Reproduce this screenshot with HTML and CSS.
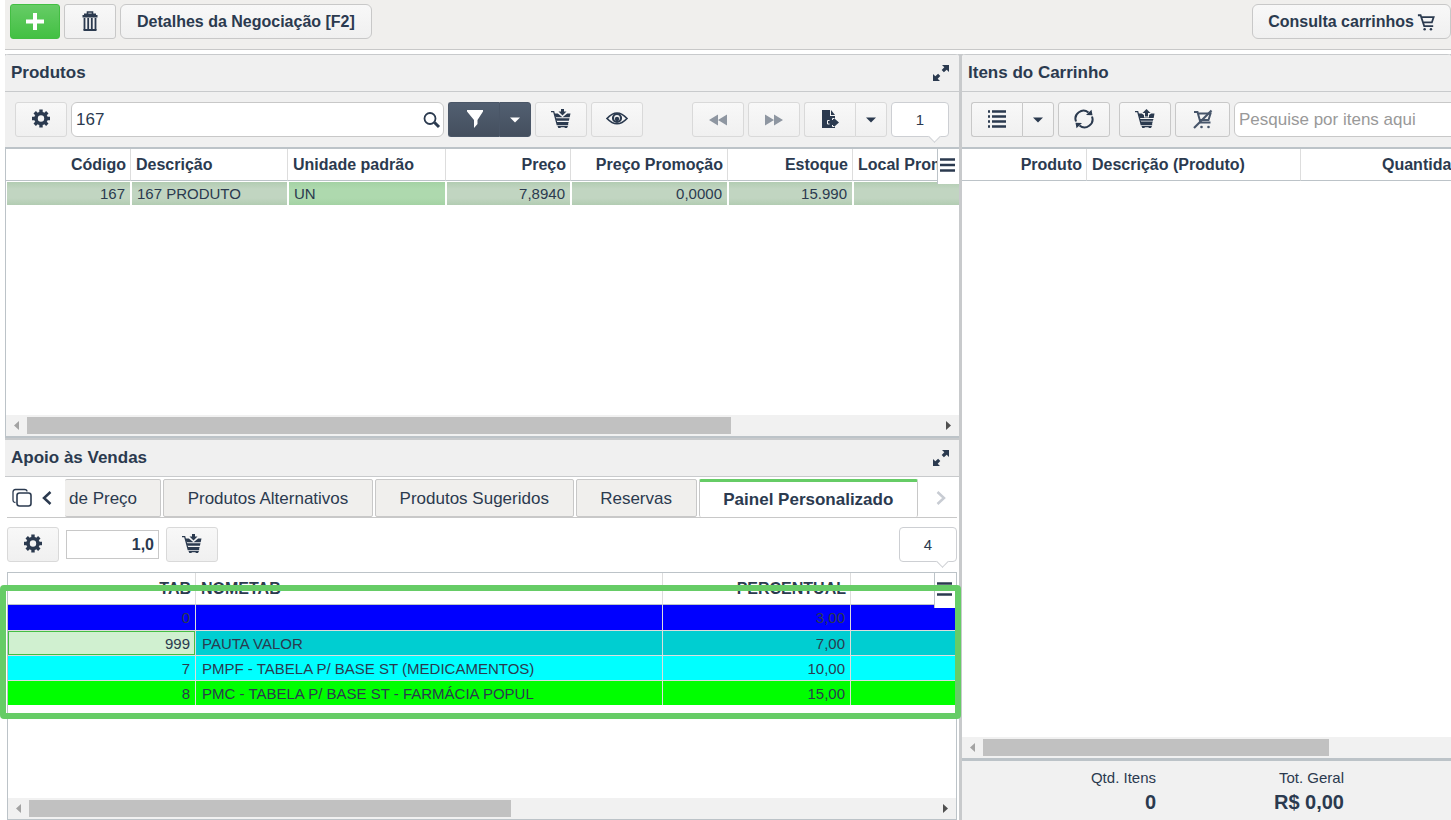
FILE: index.html
```html
<!DOCTYPE html>
<html lang="pt-BR">
<head>
    <meta charset="UTF-8">
    <meta name="viewport" content="width=device-width, initial-scale=1.0">
    <title>Central de Vendas</title>
    <link rel="stylesheet" href="styles.css">
</head>
<body>
<!-- icones -->
<svg class="sprite" aria-hidden="true">
    <symbol id="i-plus" viewBox="0 0 20 20"><path d="M1 10.500h18M10 2v17" fill="none" stroke="currentColor" stroke-width="4"/></symbol>
    <symbol id="i-trash" viewBox="0 0 20 20"><path d="M7.500 3V1h5v2" fill="none" stroke="currentColor" stroke-width="1.600"/><path d="M4 2.500h12v1.500h1.500v2.500h-15V4H4zM3.500 18h13v2h-13z" fill="currentColor"/><path d="M4.500 7v12M8.200 7v12M11.800 7v12M15.500 7v12" fill="none" stroke="currentColor" stroke-width="1.800"/></symbol>
    <symbol id="i-gear" viewBox="0 0 20 20"><circle cx="10" cy="9.500" r="5" fill="none" stroke="currentColor" stroke-width="3.600"/><g stroke="currentColor" stroke-width="3.400"><path d="M10 .5v3M10 15.500v3M1 9.500h3M16 9.500h3M3.700 3.200l2 2M14.300 13.800l2 2M16.300 3.200l-2 2M5.700 13.800l-2 2"/></g></symbol>
    <symbol id="i-search" viewBox="0 0 20 20"><circle cx="8" cy="8.500" r="5.500" fill="none" stroke="currentColor" stroke-width="1.800"/><path d="M12.500 12.500l4.500 4.500" stroke="currentColor" stroke-width="3"/></symbol>
    <symbol id="i-filter" viewBox="0 0 20 20"><path d="M3 1h16v1.500l-5.500 8.500v4L10 19v-8L3 2.500z" fill="currentColor"/></symbol>
    <symbol id="i-down" viewBox="0 0 10 6"><path d="M0 .5h10L5 5.500z" fill="currentColor"/></symbol>
    <symbol id="i-basket-in" viewBox="0 0 20 20"><path d="M0 2.700h2.700l3.500 13h11" fill="none" stroke="currentColor" stroke-width="1.300"/><path d="M10 0h3v2.500h2.500l-4 4-4-4H10z" fill="currentColor"/><path d="M3.500 4.500h3.300l4.700 3.800 4.700-3.800H19.500l-.8 3.800H4.500zM4.700 9.300h13.800l-.6 2.500H5.400zM5.700 13h12l-.9 2.700H6.300zM6.500 17h10.500l-1 2h-2l-.7-.8H10l-.7.8h-2z" fill="currentColor"/></symbol>
    <symbol id="i-basket-out" viewBox="0 0 20 20"><path d="M0 2.700h2.700l3.500 13h11" fill="none" stroke="currentColor" stroke-width="1.300"/><path d="M11.500 0l4 4H13v3.500h-3V4H7.500z" fill="currentColor"/><path d="M3.500 4.500h3.300L9 6v2.500h5V6l2.200-1.500h3.300l-.8 4.500H4.500zM4.700 10h13.800l-.6 1.800H5.400zM5.600 12.500h12.200l-1 3.200H6.300zM6.500 17h10.500l-1 2h-2l-.7-.8H10l-.7.8h-2z" fill="currentColor"/></symbol>
    <symbol id="i-eye" viewBox="0 0 22 14"><path d="M1 6.500Q11-4.500 21 6.500 11 17 1 6.500z" fill="none" stroke="currentColor" stroke-width="1.700"/><circle cx="11" cy="6" r="4" fill="none" stroke="currentColor" stroke-width="2.200"/><circle cx="11" cy="7" r="2.200" fill="currentColor"/></symbol>
    <symbol id="i-back" viewBox="0 0 18 12"><path d="M9 .5v11L0 6zM18 .5v11L9 6z" fill="currentColor"/></symbol>
    <symbol id="i-forward" viewBox="0 0 18 12"><path d="M0 .5v11L9 6zM9 .5v11L18 6z" fill="currentColor"/></symbol>
    <symbol id="i-export" viewBox="0 0 20 20"><path d="M2 1h8v6h5v3l4 3.500-4 3.500v2H2z" fill="currentColor"/><path d="M11 1l4 5h-4z" fill="currentColor"/><path d="M9.500 11.500H7.500v3.500h2M12.500 11v-1.500h2M12.500 16v1.500h2" fill="none" stroke="#f4f4f4"/></symbol>
    <symbol id="i-expand" viewBox="0 0 18 18"><path d="M10 1h7v7l-2.300-2.300-2.800 2.600-2.200-2.200 2.600-2.800zM8 17H1v-7l2.300 2.300 2.800-2.600 2.200 2.200-2.600 2.800z" fill="currentColor"/></symbol>
    <symbol id="i-menu" viewBox="0 0 16 14"><path d="M1 1.500h15M1 7h15M1 12.500h15" stroke="currentColor" stroke-width="2.600"/></symbol>
    <symbol id="i-list" viewBox="0 0 20 20"><path d="M1 2.500h2M1 7.500h2M1 12.500h2M1 17.500h2M5 2.500h14M5 7.500h14M5 12.500h14M5 17.500h14" stroke="currentColor" stroke-width="2.600"/></symbol>
    <symbol id="i-refresh" viewBox="0 0 20 20"><path d="M2 12.500A8 8 0 0 1 14.500 3.500M18 7.500A8 8 0 0 1 5.500 16.500" fill="none" stroke="currentColor" stroke-width="2"/><path d="M12 6l6.500.2L17.500.7zM8 14l-6.500-.2 1 5.500z" fill="currentColor"/></symbol>
    <symbol id="i-cart" viewBox="0 0 20 20"><path d="M1 2.500h3l4 12h10M5 4.500h13.500l-2 6H7.500" fill="none" stroke="currentColor" stroke-width="2"/><circle cx="8.500" cy="18" r="1.400" fill="currentColor"/><circle cx="15.500" cy="18" r="1.400" fill="currentColor"/></symbol>
    <symbol id="i-cart-off" viewBox="0 0 20 20"><g color="#46556a"><path d="M1 3h3.500l3 10.500h10M4.500 4.500H17.500l-2 6.500H7" fill="none" stroke="currentColor" stroke-width="2"/><path d="M18.500 1.500L1 19" stroke="currentColor" stroke-width="2.200"/><circle cx="8.500" cy="18" r="1.300" fill="currentColor"/><circle cx="15.500" cy="18" r="1.300" fill="currentColor"/></g></symbol>
    <symbol id="i-copy" viewBox="0 0 20 20"><rect x="5" y="5" width="14" height="13" rx="2.500" fill="none" stroke="currentColor" stroke-width="1.600"/><path d="M3.500 14.500Q1 14.500 1 12V4q0-2.500 2.500-2.500h9Q15 1.500 15 3.500" fill="none" stroke="currentColor" stroke-width="1.300"/></symbol>
    <symbol id="i-prev" viewBox="0 0 10 14"><path d="M8.500 1L2 7l6.500 6" fill="none" stroke="currentColor" stroke-width="2.500"/></symbol>
    <symbol id="i-next" viewBox="0 0 10 14"><path d="M1.500 1L8 7l-6.500 6" fill="none" stroke="currentColor" stroke-width="2.500"/></symbol>
    <symbol id="i-sleft" viewBox="0 0 5 9"><path d="M5 0v9L0 4.500z" fill="currentColor"/></symbol>
    <symbol id="i-sright" viewBox="0 0 5 9"><path d="M0 0v9l5-4.500z" fill="currentColor"/></symbol>
</svg>

<header class="topbar">
    <button type="button" class="btn btn-add" aria-label="Adicionar"><svg class="ico"><use href="#i-plus"/></svg></button>
    <button type="button" class="btn btn-line" aria-label="Excluir"><svg class="ico"><use href="#i-trash"/></svg></button>
    <button type="button" class="btn btn-text">Detalhes da Negociação [F2]</button>
    <button type="button" class="btn btn-text btn-right">Consulta carrinhos <svg class="ico ico-cart"><use href="#i-cart"/></svg></button>
</header>

<main class="content">
    <div class="left">
        <section class="panel">
            <div class="panel-title">
                <h2>Produtos</h2>
                <button type="button" class="plain" aria-label="Expandir"><svg class="ico ico-expand"><use href="#i-expand"/></svg></button>
            </div>
            <div class="toolbar">
                <button type="button" class="btn" aria-label="Configurar"><svg class="ico"><use href="#i-gear"/></svg></button>
                <div class="search">
                    <input type="text" value="167" aria-label="Pesquisar produtos">
                    <button type="button" class="plain" aria-label="Pesquisar"><svg class="ico"><use href="#i-search"/></svg></button>
                </div>
                <div class="group dark">
                    <button type="button" class="btn" aria-label="Filtrar"><svg class="ico"><use href="#i-filter"/></svg></button>
                    <button type="button" class="btn btn-drop" aria-label="Opções de filtro"><svg class="ico-down"><use href="#i-down"/></svg></button>
                </div>
                <button type="button" class="btn" aria-label="Adicionar ao carrinho"><svg class="ico"><use href="#i-basket-in"/></svg></button>
                <button type="button" class="btn" aria-label="Visualizar"><svg class="ico-eye"><use href="#i-eye"/></svg></button>
                <button type="button" class="btn btn-nav first" aria-label="Anterior"><svg class="ico-nav"><use href="#i-back"/></svg></button>
                <button type="button" class="btn btn-nav" aria-label="Próximo"><svg class="ico-nav"><use href="#i-forward"/></svg></button>
                <div class="group">
                    <button type="button" class="btn" aria-label="Exportar"><svg class="ico"><use href="#i-export"/></svg></button>
                    <button type="button" class="btn btn-drop" aria-label="Opções de exportação"><svg class="ico-down"><use href="#i-down"/></svg></button>
                </div>
                <output class="count">1</output>
            </div>
            <div class="grid">
                <table class="tbl tbl-prod">
                    <colgroup><col class="c-num"><col class="c-txt"><col class="c-unid"><col class="c-num"><col class="c-txt"><col class="c-num"><col class="c-txt"></colgroup>
                    <thead>
                        <tr><th class="num">Código</th><th>Descrição</th><th>Unidade padrão</th><th class="num">Preço</th><th class="num">Preço Promoção</th><th class="num">Estoque</th><th>Local Promoção</th></tr>
                    </thead>
                    <tbody>
                        <tr><td class="num">167</td><td>167 PRODUTO</td><td class="current">UN</td><td class="num">7,8940</td><td class="num">0,0000</td><td class="num">15.990</td><td></td></tr>
                    </tbody>
                </table>
                <button type="button" class="menu" aria-label="Colunas"><svg><use href="#i-menu"/></svg></button>
            </div>
            <div class="scroll">
                <span class="arrow off"><svg><use href="#i-sleft"/></svg></span>
                <div class="track"><div class="thumb thumb-prod"></div></div>
                <span class="arrow"><svg><use href="#i-sright"/></svg></span>
            </div>
        </section>

        <section class="panel panel-apoio">
            <div class="panel-title">
                <h2>Apoio às Vendas</h2>
                <button type="button" class="plain" aria-label="Expandir"><svg class="ico ico-expand"><use href="#i-expand"/></svg></button>
            </div>
            <div class="tabs">
                <button type="button" class="plain" aria-label="Abas"><svg class="ico"><use href="#i-copy"/></svg></button>
                <button type="button" class="plain" aria-label="Abas anteriores"><svg class="ico-step"><use href="#i-prev"/></svg></button>
                <div class="tab-list" role="tablist">
                    <button type="button" class="tab cut" role="tab">de Preço</button>
                    <button type="button" class="tab" role="tab">Produtos Alternativos</button>
                    <button type="button" class="tab" role="tab">Produtos Sugeridos</button>
                    <button type="button" class="tab" role="tab">Reservas</button>
                    <button type="button" class="tab active" role="tab" aria-selected="true">Painel Personalizado</button>
                </div>
                <button type="button" class="plain next" aria-label="Próximas abas"><svg class="ico-step"><use href="#i-next"/></svg></button>
            </div>
            <div class="toolbar toolbar-white">
                <button type="button" class="btn" aria-label="Configurar"><svg class="ico"><use href="#i-gear"/></svg></button>
                <input type="text" class="qty" value="1,0" aria-label="Quantidade">
                <button type="button" class="btn" aria-label="Adicionar ao carrinho"><svg class="ico"><use href="#i-basket-in"/></svg></button>
                <output class="count push">4</output>
            </div>
            <div class="grid grid-tab">
                <table class="tbl tbl-tab">
                    <colgroup><col class="c-tab"><col class="c-nome"><col class="c-tab"><col></colgroup>
                    <thead>
                        <tr><th class="num">TAB</th><th>NOMETAB</th><th class="num">PERCENTUAL</th><th></th></tr>
                    </thead>
                    <tbody>
                        <tr class="blue"><td class="num">0</td><td></td><td class="num">3,00</td><td></td></tr>
                        <tr class="teal"><td class="num selected">999</td><td>PAUTA VALOR</td><td class="num">7,00</td><td></td></tr>
                        <tr class="cyan"><td class="num">7</td><td>PMPF - TABELA P/ BASE ST (MEDICAMENTOS)</td><td class="num">10,00</td><td></td></tr>
                        <tr class="lime"><td class="num">8</td><td>PMC - TABELA P/ BASE ST - FARMÁCIA POPUL</td><td class="num">15,00</td><td></td></tr>
                    </tbody>
                </table>
                <button type="button" class="menu" aria-label="Colunas"><svg><use href="#i-menu"/></svg></button>
                <div class="mark"></div>
            </div>
            <div class="scroll scroll-tab">
                <span class="arrow off"><svg><use href="#i-sleft"/></svg></span>
                <div class="track"><div class="thumb thumb-tab"></div></div>
                <span class="arrow"><svg><use href="#i-sright"/></svg></span>
            </div>
        </section>
    </div>

    <section class="panel panel-cart">
        <div class="panel-title">
            <h2>Itens do Carrinho</h2>
        </div>
        <div class="toolbar toolbar-cart">
            <div class="group">
                <button type="button" class="btn" aria-label="Lista"><svg class="ico"><use href="#i-list"/></svg></button>
                <button type="button" class="btn btn-drop" aria-label="Opções da lista"><svg class="ico-down"><use href="#i-down"/></svg></button>
            </div>
            <button type="button" class="btn" aria-label="Atualizar"><svg class="ico"><use href="#i-refresh"/></svg></button>
            <button type="button" class="btn apart" aria-label="Remover do carrinho"><svg class="ico"><use href="#i-basket-out"/></svg></button>
            <button type="button" class="btn btn-clear" aria-label="Limpar carrinho"><svg class="ico"><use href="#i-cart-off"/></svg></button>
            <div class="search"><input type="text" placeholder="Pesquise por itens aqui" aria-label="Pesquisar itens"></div>
        </div>
        <div class="grid">
            <table class="tbl tbl-cart">
                <colgroup><col class="c-num"><col class="c-desc"><col class="c-qtd"></colgroup>
                <thead>
                    <tr><th class="num">Produto</th><th>Descrição (Produto)</th><th class="num">Quantidade</th></tr>
                </thead>
            </table>
        </div>
        <div class="scroll scroll-cart">
            <span class="arrow off"><svg><use href="#i-sleft"/></svg></span>
            <div class="track"><div class="thumb thumb-cart"></div></div>
        </div>
        <dl class="totals">
            <div><dt>Qtd. Itens</dt><dd>0</dd></div>
            <div><dt>Tot. Geral</dt><dd>R$ 0,00</dd></div>
        </dl>
    </section>
</main>
</body>
</html>
```
FILE: styles.css
```css
* {
    box-sizing: border-box;
}

body, button, input {
    font-family: "Liberation Sans", Arial, sans-serif;
    color: #2b3a4f;
}

body {
    margin: 0;
    padding-left: 5px;
    height: 100vh;
    display: flex;
    flex-direction: column;
    overflow: hidden;
    background-color: white;
    font-size: 15px;
}

svg {
    display: block;
}

.sprite {
    display: none;
}

/* barra superior */
.topbar {
    display: flex;
    gap: 4px;
    padding: 4px 0 10px 5px;
    background-color: #f0efed;
    border-bottom: 1px solid #c8c8c8;
}

.btn {
    display: flex;
    align-items: center;
    justify-content: center;
    flex: none;
    width: 52px;
    height: 35px;
    padding: 0 0 2px;
    border: 1px solid #d9d9d9;
    border-radius: 3px;
    background: linear-gradient(#f8f8f8, #f0f0f0);
}

.btn-line {
    border-color: #c8c8c8;
}

.btn-add {
    width: 50px;
    color: white;
    border-color: #43be43;
    background: linear-gradient(#66cc66, #43c043);
}

.btn-text {
    gap: 3px;
    width: auto;
    padding: 0 16px;
    border-color: #c8c8c8;
    border-radius: 6px;
    font-size: 16px;
    font-weight: bold;
}

.btn-right {
    margin-left: auto;
    padding: 0 15px;
}

.plain {
    display: flex;
    align-items: center;
    padding: 0;
    border: none;
    background: none;
}

.ico {
    width: 20px;
    height: 20px;
}

.ico-cart, .ico-expand {
    width: 18px;
    height: 18px;
}

.ico-down {
    width: 10px;
    height: 6px;
}

.ico-eye {
    width: 22px;
    height: 14px;
}

.ico-nav {
    width: 18px;
    height: 12px;
}

.ico-step {
    width: 10px;
    height: 14px;
}

/* paineis */
.content {
    flex: 1;
    min-height: 0;
    margin-top: 4px;
    display: grid;
    grid-template-columns: minmax(0, 954fr) minmax(0, 489fr);
    gap: 3px;
    background-color: #c8cacc;
}

.left {
    display: grid;
    grid-template-rows: minmax(0, 384fr) minmax(0, 380fr);
    gap: 2px;
    min-height: 0;
}

.panel {
    display: flex;
    flex-direction: column;
    min-width: 0;
    min-height: 0;
    overflow: hidden;
    background-color: white;
    border-radius: 4px 4px 0 0;
}

.panel-title {
    display: flex;
    align-items: center;
    justify-content: space-between;
    height: 38px;
    flex: none;
    padding: 0 9px 0 6px;
    background-color: #f0f0f0;
    border-top: 1px solid #c8cacc;
    border-bottom: 1px solid #c8cacc;
}

.panel-title h2 {
    margin: 0;
    font-size: 17px;
}

.panel-apoio .panel-title {
    height: 37px;
    border-top: none;
}

.toolbar {
    display: flex;
    gap: 4px;
    flex: none;
    padding: 10px;
    background-color: #f0f0f0;
    border-bottom: 2px solid #bcc3c8;
}

.push {
    margin-left: auto;
}

.search {
    display: flex;
    flex: 1;
    min-width: 0;
    padding-right: 1px;
    border: 1px solid #c8c8c8;
    border-radius: 6px;
    background-color: white;
}

.search input {
    flex: 1;
    min-width: 0;
    padding: 0 4px;
    border: none;
    background: none;
    font-size: 17px;
}

.search input::placeholder {
    color: #999;
}

.group {
    display: flex;
}

.group .btn:first-child {
    width: 51px;
    border-radius: 3px 0 0 3px;
    border-right: none;
}

.btn-drop {
    width: 32px;
    border-radius: 0 3px 3px 0;
    padding: 0;
}

.dark .btn {
    color: white;
    border-color: #4a5667;
    background: linear-gradient(#525f71, #444f5e);
}

.btn-nav {
    padding: 0;
    color: #8e96a1;
}

.btn-nav.first {
    margin-left: 45px;
}

/* contador com ponta */
.count {
    position: relative;
    width: 58px;
    height: 35px;
    line-height: 33px;
    text-align: center;
    border: 1px solid #cdcfd3;
    border-radius: 4px;
    background-color: white;
}

.count::after {
    content: "";
    position: absolute;
    right: 9px;
    bottom: -5px;
    width: 8px;
    height: 8px;
    background-color: white;
    border: solid #cdcfd3;
    border-width: 0 1px 1px 0;
    transform: rotate(45deg);
}

/* tabelas */
.grid {
    position: relative;
    flex: 1;
    min-height: 0;
    overflow: hidden;
    border-left: 1px solid #bcc3c8;
}

.tbl {
    table-layout: fixed;
    border-collapse: separate;
    border-spacing: 0;
}

.tbl-prod {
    width: 1004px;
}

.tbl-cart {
    width: 513px;
}

.tbl-tab {
    width: 100%;
}

.c-num {
    width: 125px;
}

.c-txt {
    width: 157px;
}

.c-unid {
    width: 158px;
}

.c-tab {
    width: 188px;
}

.c-nome {
    width: 467px;
}

.c-desc {
    width: 214px;
}

.c-qtd {
    width: 174px;
}

.tbl th {
    height: 32px;
    padding: 0 4px 0 5px;
    border-right: 1px solid #ddd;
    border-bottom: 1px solid #bcc3c8;
    font-size: 16px;
    text-align: left;
    white-space: nowrap;
}

.tbl td {
    height: 25px;
    padding: 0 5px;
    border-right: 1px solid #ddd;
    border-top: 1px solid #ddd;
    white-space: nowrap;
}

.tbl .num {
    text-align: right;
}

.tbl-prod td {
    height: 24px;
    border: 1px solid white;
    border-bottom: none;
    background: linear-gradient(#b2ccb2, #c1d5c1 30%, #c1d5c1 70%, #b2ccb2) padding-box;
}

.tbl-prod td.current {
    background: linear-gradient(#a4d2a4, #aed9ae 30%, #aed9ae 70%, #a4d2a4) padding-box;
}

.menu {
    position: absolute;
    top: 0;
    right: 0;
    width: 22px;
    height: 35px;
    padding: 0 0 3px 1px;
    border: none;
    border-left: 1px solid #bcc3c8;
    background-color: white;
}

.menu svg {
    width: 16px;
    height: 14px;
}

/* rolagem */
.scroll {
    display: flex;
    align-items: center;
    flex: none;
    height: 23px;
    background-color: #f1f1f1;
    border-left: 1px solid #bcc3c8;
    border-bottom: 2px solid #bcc3c8;
}

.arrow {
    display: flex;
    justify-content: center;
    width: 21px;
    color: #505050;
}

.arrow.off {
    color: #a3a3a3;
}

.arrow svg {
    width: 5px;
    height: 9px;
}

.track {
    flex: 1;
}

.thumb {
    height: 17px;
    background-color: #c1c1c1;
}

.thumb-prod {
    width: 77.3%;
}

.thumb-tab {
    width: 53.2%;
}

.thumb-cart {
    width: 74%;
}

/* apoio as vendas */
.panel-apoio {
    overflow: visible;
}

.tabs {
    display: flex;
    gap: 10px;
    height: 41px;
    flex: none;
    margin: 0 2px;
    padding: 2px 0 0 5px;
    border-bottom: 1px solid #c8c8c8;
}

.tab-list {
    display: flex;
    flex: 1;
    gap: 2px;
    margin-left: 3px;
}

.tab {
    flex: 1 0 auto;
    padding: 2px 22px 0;
    border: 1px solid #c8c8c8;
    border-radius: 2px;
    background-color: #f0efed;
    font-size: 17px;
}

.tab.cut {
    flex: none;
    width: 96px;
    padding: 2px 4px 0;
    border-left: none;
    text-align: left;
}

.tab.active {
    padding-top: 0;
    border-top: 3px solid #66cc66;
    border-bottom: none;
    background-color: white;
    font-weight: bold;
}

.next {
    width: 29px;
    padding-left: 8px;
    color: #c8ccd3;
}

.toolbar-white {
    gap: 7px;
    padding: 9px 2px 10px;
    background-color: white;
    border-bottom: none;
}

.qty {
    align-self: center;
    width: 93px;
    height: 29px;
    padding: 0 4px;
    border: 1px solid #c8c8c8;
    font-size: 16px;
    font-weight: bold;
    text-align: right;
}

.grid-tab {
    overflow: visible;
    margin: 0 2px;
    border: 1px solid #bcc3c8;
    border-bottom: none;
}

.tbl-tab td:last-child {
    border-right: none;
}

.tbl-tab td {
    padding-left: 6px;
}

.blue td {
    background-color: #0000ff;
    border-top: none;
}

.teal td {
    background-color: #00ced1;
}

.cyan td {
    background-color: #00ffff;
}

.lime td {
    background-color: #00ff00;
}

.tbl-tab td.selected {
    background-color: #d0f0d0;
    box-shadow: inset 0 0 0 1px #43be43;
}

/* destaque por cima da tabela */
.mark {
    position: absolute;
    top: 12px;
    left: -8px;
    right: -5px;
    height: 134px;
    border: 6px solid #66cc66;
    border-radius: 4px;
    pointer-events: none;
}

.scroll-tab {
    height: 22px;
    margin: 0 2px;
    border: 1px solid #bcc3c8;
    border-top: none;
}

/* carrinho */
.toolbar-cart {
    padding-left: 9px;
}

.toolbar-cart .search {
    margin-right: -18px;
}

.apart {
    margin-left: 5px;
}

.btn-clear {
    width: 55px;
}

.toolbar-cart .btn {
    border-color: #c8c8c8;
}

.panel-cart .grid, .scroll-cart {
    border-left: none;
}

.scroll-cart {
    height: 24px;
    border-bottom-width: 3px;
}

.totals {
    display: flex;
    flex: none;
    margin: 0;
    padding: 7px 107px 6px 6px;
    height: 59px;
    background-color: #f1f1f1;
    text-align: right;
}

.totals div {
    width: 188px;
}

.totals dt {
    line-height: 20px;
}

.totals dd {
    margin: 0;
    font-size: 20px;
    font-weight: bold;
    line-height: 28px;
}
```
